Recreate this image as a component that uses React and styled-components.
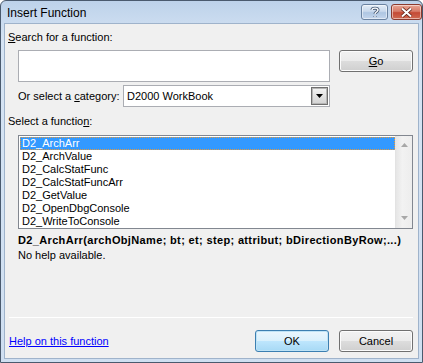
import React from 'react';
import styled, { createGlobalStyle } from 'styled-components';

const Global = createGlobalStyle`
  html, body { margin: 0; padding: 0; background: #fff; }
  * { box-sizing: border-box; }
  body { font-family: "Liberation Sans", Arial, sans-serif; font-size: 11px; color: #000; }
`;

const Window = styled.div`
  width: 423px;
  height: 363px;
  display: flex;
  flex-direction: column;
  border: 1px solid #4a5a6e;
  border-radius: 6px 6px 0 0;
  background: linear-gradient(#bdd2ea, #d6e4f4 40px, #cfdff1);
  padding: 0 3px 3px 3px;
`;

const TitleBar = styled.div`
  height: 22px;
  display: flex;
  align-items: center;
  justify-content: space-between;
  padding: 0 0 0 3px;
`;

const Title = styled.div`
  font-size: 12px;
  color: #000;
  margin-top: 1px;
`;

const Caps = styled.div`
  display: flex;
  gap: 3px;
  align-self: flex-start;
  margin-top: 3px;
  margin-right: -3px;
`;

const CapButton = styled.div`
  width: ${p => p.$w}px;
  height: 16px;
  border-radius: 3px;
  border: 1px solid ${p => (p.$close ? '#8b3a2e' : '#6a82a0')};
  background: ${p =>
    p.$close
      ? 'linear-gradient(#e8a493, #d77b68 45%, #c44a35 55%, #cf6a52)'
      : 'linear-gradient(#e4edf7, #c9d9ec 45%, #aec6e2 55%, #c4d6ec)'};
  box-shadow: inset 0 0 0 1px rgba(255, 255, 255, 0.5);
  display: flex;
  align-items: center;
  justify-content: center;
`;

const Client = styled.div`
  flex: 1;
  display: flex;
  flex-direction: column;
  background: #f0f0f0;
  border: 1px solid #9fb3cb;
  padding: 0 5px 0 3px;
`;

const Label = styled.div`
  line-height: 13px;
  margin-top: ${p => p.$mt || 0}px;
  white-space: nowrap;
`;

const Row = styled.div`
  display: flex;
  align-items: ${p => p.$align || 'flex-start'};
  margin-top: ${p => p.$mt || 0}px;
  margin-left: ${p => p.$ml || 0}px;
`;

const TextBox = styled.div`
  width: 312px;
  height: 32px;
  background: #fff;
  border: 1px solid #abadb3;
`;

const Button = styled.div`
  width: ${p => p.$w || 74}px;
  height: 22px;
  margin-left: ${p => p.$ml || 0}px;
  border-radius: 3px;
  border: 1px solid ${p => (p.$def ? '#3c7fb1' : '#707070')};
  background: ${p =>
    p.$def
      ? 'linear-gradient(#eaf6fd, #d9f0fc 50%, #bee6fd 50%, #a7d9f5)'
      : 'linear-gradient(#f2f2f2, #ebebeb 50%, #dddddd 50%, #cfcfcf)'};
  box-shadow: inset 0 0 0 1px ${p => (p.$def ? '#bfe3f6' : '#fcfcfc')};
  display: flex;
  align-items: center;
  justify-content: center;
  line-height: 13px;
`;

const U = styled.span`
  text-decoration: underline;
`;

const CatLabel = styled.div`
  width: 105px;
  white-space: nowrap;
`;

const Combo = styled.div`
  width: 207px;
  height: 22px;
  display: flex;
  align-items: stretch;
  background: #fff;
  border: 1px solid #abadb3;
  padding: 1px 1px 1px 0;
`;

const ComboText = styled.div`
  flex: 1;
  display: flex;
  align-items: center;
  padding-left: 3px;
`;

const DropButton = styled.div`
  width: 17px;
  border: 1px solid #6f6f6f;
  box-shadow: inset 0 0 0 1px #b5b5b5;
  background: linear-gradient(#f4f4f4, #e2e2e2 50%, #d3d3d3);
  display: flex;
  align-items: center;
  justify-content: center;
`;

const List = styled.div`
  margin: 7px 0 0 10px;
  width: 395px;
  height: 94px;
  border: 1px solid #828790;
  background: #fff;
  display: flex;
`;

const Items = styled.div`
  flex: 1;
  padding: 1px 0 0 1px;
`;

const Item = styled.div`
  height: 13px;
  line-height: 13px;
  padding-left: 2px;
  white-space: nowrap;
  background: ${p => (p.$sel ? '#3399ff' : 'transparent')};
  color: ${p => (p.$sel ? '#fff' : '#000')};
  outline: ${p => (p.$sel ? '1px dotted #e59a3c' : 'none')};
  outline-offset: -1px;
`;

const ScrollBar = styled.div`
  width: 17px;
  background: linear-gradient(90deg, #e6e6e6, #f2f2f2 40%, #ededed);
  border-left: 1px solid #e3e3e3;
  display: flex;
  flex-direction: column;
  justify-content: space-between;
  align-items: center;
  padding: 7px 0 8px;
`;

const Syntax = styled.div`
  margin: 4px 0 0 10px;
  font-weight: bold;
  letter-spacing: 0.35px;
  line-height: 15px;
  white-space: nowrap;
`;

const Desc = styled.div`
  margin-left: 10px;
  line-height: 15px;
`;

const Separator = styled.div`
  margin: auto 0 0 1px;
  height: 1px;
  background: #d5dfe5;
  border-bottom: 1px solid #ffffff;
`;

const Footer = styled.div`
  display: flex;
  align-items: center;
  margin: 12px 0 6px 1px;
`;

const Link = styled.a`
  color: #0000ff;
  text-decoration: underline;
  margin-right: auto;
  cursor: pointer;
`;

const Triangle = ({ up, color = '#000', w = 7 }) => (
  <svg width={w} height={4} viewBox="0 0 7 4">
    <path d={up ? 'M0 4 L3.5 0 L7 4 Z' : 'M0 0 L7 0 L3.5 4 Z'} fill={color} />
  </svg>
);

const functions = [
  'D2_ArchArr',
  'D2_ArchValue',
  'D2_CalcStatFunc',
  'D2_CalcStatFuncArr',
  'D2_GetValue',
  'D2_OpenDbgConsole',
  'D2_WriteToConsole',
];

export default function App() {
  return (
    <>
      <Global />
      <Window>
        <TitleBar>
          <Title>Insert Function</Title>
          <Caps>
            <CapButton $w={27}>
              <svg width="10" height="12" viewBox="0 0 10 12">
                <path
                  d="M2 4 C2 1.5 8 1.5 8 4 C8 6 5 6 5 8 M5 10 L5 11"
                  fill="none"
                  stroke="#4a5d78"
                  strokeWidth="3"
                />
                <path
                  d="M2 4 C2 1.5 8 1.5 8 4 C8 6 5 6 5 8 M5 10 L5 11"
                  fill="none"
                  stroke="#fff"
                  strokeWidth="1.4"
                />
              </svg>
            </CapButton>
            <CapButton $w={31} $close>
              <svg width="13" height="11" viewBox="0 0 13 11">
                <path d="M2 1.5 L11 9.5 M11 1.5 L2 9.5" stroke="#5a1e14" strokeWidth="3.6" />
                <path d="M2 1.5 L11 9.5 M11 1.5 L2 9.5" stroke="#fff" strokeWidth="2" />
              </svg>
            </CapButton>
          </Caps>
        </TitleBar>
        <Client>
          <Label $mt={7}>
            <U>S</U>earch for a function:
          </Label>
          <Row $mt={6} $ml={10}>
            <TextBox />
            <Button $ml={9}>
              <span>
                <U>G</U>o
              </span>
            </Button>
          </Row>
          <Row $mt={3} $ml={10} $align="center">
            <CatLabel>
              Or select a <U>c</U>ategory:
            </CatLabel>
            <Combo>
              <ComboText>D2000 WorkBook</ComboText>
              <DropButton>
                <Triangle />
              </DropButton>
            </Combo>
          </Row>
          <Label $mt={8}>
            Select a functio<U>n</U>:
          </Label>
          <List>
            <Items>
              {functions.map((f, i) => (
                <Item key={f} $sel={i === 0}>
                  {f}
                </Item>
              ))}
            </Items>
            <ScrollBar>
              <Triangle up color="#a8a8a8" />
              <Triangle color="#a8a8a8" />
            </ScrollBar>
          </List>
          <Syntax>D2_ArchArr(archObjName; bt; et; step; attribut; bDirectionByRow;...)</Syntax>
          <Desc>No help available.</Desc>
          <Separator />
          <Footer>
            <Link>Help on this function</Link>
            <Button $def>OK</Button>
            <Button $ml={10}>Cancel</Button>
          </Footer>
        </Client>
      </Window>
    </>
  );
}
